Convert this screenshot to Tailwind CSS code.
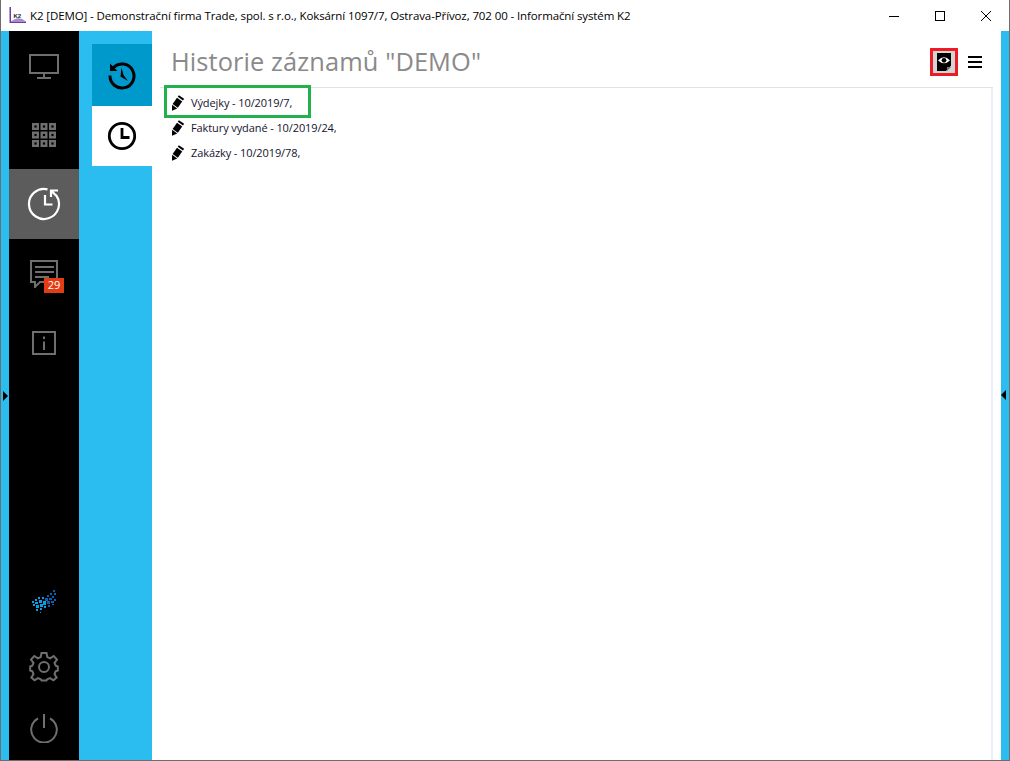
<!DOCTYPE html>
<html lang="cs">
<head>
  <meta charset="UTF-8">
  <script src="https://cdn.jsdelivr.net/npm/@tailwindcss/browser@4"></script>
  <title>K2 - Historie záznamů</title>
</head>
<body class="overflow-hidden bg-white">
  <div class="relative flex h-[761px] w-[1010px] flex-col overflow-hidden border-x border-b border-[#6e6e6e] font-['Open_Sans',sans-serif]">

    <!-- title bar -->
    <header class="flex h-[31px] shrink-0 items-center bg-white">
      <svg class="ml-2 h-[18px] w-[18px] shrink-0" viewBox="0 0 18 18">
        <path d="M0.5 0 V16 H17 V14.5 H2 V0 Z" fill="#6b3fa0"/>
        <path d="M2 15 Q9 8 17 14.5 Z" fill="#a58ad0"/>
        <text x="4.5" y="10.5" font-size="6" font-weight="700" font-family="Liberation Sans" fill="#222">K2</text>
      </svg>
      <span class="ml-[3px] whitespace-nowrap text-[11.5px] tracking-[-0.11px] text-black">K2 [DEMO] - Demonstrační firma Trade, spol. s r.o., Koksární 1097/7, Ostrava-Přívoz, 702 00 - Informační systém K2</span>
      <div class="ml-auto flex items-center">
        <svg class="mr-[34px] h-[12px] w-[12px]" viewBox="0 0 12 12"><path d="M1 6.5H11" stroke="#000" stroke-width="1"/></svg>
        <svg class="mr-[34px] h-[12px] w-[12px]" viewBox="0 0 12 12"><rect x="1.5" y="1.5" width="9" height="9" fill="none" stroke="#000" stroke-width="1"/></svg>
        <svg class="mr-[17px] h-[12px] w-[12px]" viewBox="0 0 12 12"><path d="M1 1L11 11M11 1L1 11" stroke="#000" stroke-width="1"/></svg>
      </div>
    </header>

    <div class="flex min-h-0 flex-1 bg-[#2bbcf0]">
      <!-- main menu -->
      <nav class="ml-2 flex w-[70px] shrink-0 flex-col bg-black">
        <div class="flex h-[69px] items-center justify-center">
          <svg class="h-[32px] w-[32px]" viewBox="0 0 32 32" fill="none" stroke="#6f6f6f" stroke-width="2"><rect x="2" y="5" width="28" height="18"/><path d="M16 23V27M9 28H23"/></svg>
        </div>
        <div class="flex h-[69px] items-center justify-center">
          <svg class="h-[24px] w-[24px]" viewBox="0 0 24 24" fill="none" stroke="#6f6f6f" stroke-width="2.4">
            <rect x="1.2" y="1.2" width="4.6" height="4.6"/><rect x="9.7" y="1.2" width="4.6" height="4.6"/><rect x="18.2" y="1.2" width="4.6" height="4.6"/>
            <rect x="1.2" y="9.7" width="4.6" height="4.6"/><rect x="9.7" y="9.7" width="4.6" height="4.6"/><rect x="18.2" y="9.7" width="4.6" height="4.6"/>
            <rect x="1.2" y="18.2" width="4.6" height="4.6"/><rect x="9.7" y="18.2" width="4.6" height="4.6"/><rect x="18.2" y="18.2" width="4.6" height="4.6"/>
          </svg>
        </div>
        <div class="flex h-[70px] items-center justify-center bg-[#5c5c5c]">
          <svg class="h-[34px] w-[34px]" viewBox="0 0 34 34" fill="none" stroke="#fff" stroke-width="2.2"><path d="M20.5 2.4A15 15 0 1 0 29 8"/><path d="M18 8V17.5H25.5"/><path d="M24 10V3.5H31M24 3.5L29 8.5"/></svg>
        </div>
        <div class="flex h-[69px] items-center justify-center">
          <div class="relative h-[35px] w-[40px]">
            <svg class="absolute left-[6px] top-[4px] h-[28px] w-[28px]" viewBox="0 0 28 28" fill="none" stroke="#6f6f6f" stroke-width="2"><path d="M1 1H27V22H10L5 27V22H1Z"/><path d="M5 7H24M5 12H24M5 17H19"/></svg>
            <span class="absolute left-[20px] top-[22px] flex h-[15px] w-[20px] items-center justify-center bg-[#e23c14] text-[11px] text-white">29</span>
          </div>
        </div>
        <div class="flex h-[69px] items-center justify-center">
          <svg class="h-[24px] w-[24px]" viewBox="0 0 24 24" fill="none" stroke="#6f6f6f" stroke-width="2"><rect x="1" y="1" width="22" height="22"/><path d="M12 5.5V8M12 10.5V19"/></svg>
        </div>

        <div class="mt-auto flex flex-col items-center pb-[17px]">
          <svg class="h-[24px] w-[24px]" viewBox="0 0 24 24">
            <g fill="#0aa0e8">
              <rect x="0" y="11" width="2" height="2"/><rect x="1" y="14" width="2" height="2"/><rect x="3" y="9" width="2" height="2"/><rect x="3" y="12" width="3" height="2"/><rect x="4" y="15" width="3" height="3"/><rect x="4" y="19" width="2" height="2"/><rect x="6" y="7" width="2" height="2"/><rect x="7" y="10" width="3" height="3"/><rect x="8" y="14" width="3" height="3"/><rect x="8" y="18" width="2" height="2"/><rect x="10" y="7" width="2" height="2"/><rect x="11" y="11" width="3" height="4"/><rect x="12" y="16" width="2" height="2"/><rect x="8" y="22" width="1" height="1"/>
            </g>
            <g fill="#0b5fae">
              <rect x="13" y="8" width="3" height="3"/><rect x="15" y="11" width="3" height="3"/><rect x="15" y="5" width="2" height="2"/><rect x="17" y="8" width="3" height="2"/><rect x="18" y="3" width="2" height="2"/><rect x="19" y="11" width="3" height="2"/><rect x="20" y="6" width="2" height="2"/><rect x="21" y="0" width="2" height="2"/><rect x="22" y="3" width="2" height="2"/><rect x="22" y="9" width="2" height="2"/><rect x="16" y="15" width="2" height="2"/><rect x="20" y="14" width="2" height="1"/>
            </g>
          </svg>
          <svg class="mt-[38px] h-[30px] w-[30px]" viewBox="0 0 30 30" fill="none" stroke="#6f6f6f" stroke-width="2">
            <path d="M12.5 1.5H17.5L18.3 5.6L21.2 6.8L24.7 4.5L28 8L25.5 11.4L26.7 14.2L28.8 15V19L26.6 19.8L25.5 22.6L27.6 26L24.4 28.8L21 26.7L18.2 27.9L17.4 29H12.6L11.8 27.9L9 26.7L5.6 28.8L2.4 26L4.5 22.6L3.4 19.8L1.2 19V15L3.3 14.2L4.5 11.4L2 8L5.3 4.5L8.8 6.8L11.7 5.6Z" transform="translate(0 -.5)"/>
            <circle cx="15" cy="15" r="5"/>
          </svg>
          <svg class="mt-[31px] h-[30px] w-[30px]" viewBox="0 0 30 30" fill="none" stroke="#6f6f6f" stroke-width="2"><path d="M9 5.5A12.8 12.8 0 1 0 21 5.5"/><path d="M15 1V15"/></svg>
        </div>
      </nav>

      <!-- sub menu -->
      <aside class="ml-[13px] mt-[13px] flex w-[60px] shrink-0 flex-col">
        <div class="flex h-[62px] items-center justify-center bg-[#0099cc]">
          <svg class="h-[30px] w-[30px]" viewBox="0 0 30 30" fill="none" stroke="#000" stroke-width="3"><path d="M6.5 7.5A12 12 0 1 1 3 15.5"/><path d="M3 3.5V11H10.5Z" fill="#000" stroke="none"/><path d="M14.5 7.5L16.5 15L21 21L13.5 16.5Z" fill="#000" stroke="none"/></svg>
        </div>
        <div class="flex h-[60px] items-center justify-center bg-white">
          <svg class="h-[30px] w-[30px]" viewBox="0 0 30 30" fill="none" stroke="#000" stroke-width="2.8"><circle cx="15" cy="15" r="12.7"/><path d="M15 7V16.5H22.5"/></svg>
        </div>
      </aside>

      <!-- content -->
      <main class="flex w-[849px] shrink-0 flex-col bg-white pl-2 pr-2">
        <div class="flex h-[57px] shrink-0 items-center justify-between border-b border-[#e2e2e2] pt-[5px]">
          <h1 class="ml-[11px] whitespace-nowrap text-[25.4px] font-normal leading-none tracking-[0.1px] text-[#8a8a8a]">Historie záznamů "DEMO"</h1>
          <div class="mr-[11px] flex items-center gap-[10px]">
            <button class="flex h-[28px] w-[28px] items-center justify-center border-[3px] border-[#ed1c24] bg-[#d4d4d4]">
              <svg class="h-[18px] w-[14px]" viewBox="0 0 14 18">
                <path d="M0 0H14V12.5L9 18H0Z" fill="#000"/>
                <path d="M1 7.5Q7 1 13 7.5Q7 13 1 7.5Z" fill="#fff"/>
                <circle cx="7" cy="7.3" r="2.4" fill="#000"/>
                <path d="M10 18V14H14Z" fill="#777"/>
              </svg>
            </button>
            <svg class="h-[12px] w-[14px]" viewBox="0 0 14 12" fill="#000"><rect y="0" width="14" height="2"/><rect y="5" width="14" height="2"/><rect y="10" width="14" height="2"/></svg>
          </div>
        </div>
        <ul class="flex-1 border-r-2 border-[#e8eefc] pt-[2px] text-[11px] leading-[25px] tracking-[-0.1px] text-[#14142b]">
          <li class="relative flex h-[25px] items-center pl-[11px]">
            <svg class="h-[16px] w-[14px] shrink-0" viewBox="0 0 14 16" fill="#000"><path d="M7.9 .15L13.1 3.85L11.96 5.47L6.76 1.77Z"/><path d="M6 2.85L11.2 6.55L6.83 12.75L1.63 9.05Z"/><path d="M1.06 9.87L6.26 13.57L1 15.8Z"/></svg>
            <span class="ml-[6px] whitespace-nowrap">Výdejky - 10/2019/7,</span>
            <span class="absolute -top-[5px] left-[4px] h-[33px] w-[147px] border-[3px] border-[#22b14c]"></span>
          </li>
          <li class="flex h-[25px] items-center pl-[11px]">
            <svg class="h-[16px] w-[14px] shrink-0" viewBox="0 0 14 16" fill="#000"><path d="M7.9 .15L13.1 3.85L11.96 5.47L6.76 1.77Z"/><path d="M6 2.85L11.2 6.55L6.83 12.75L1.63 9.05Z"/><path d="M1.06 9.87L6.26 13.57L1 15.8Z"/></svg>
            <span class="ml-[6px] whitespace-nowrap">Faktury vydané - 10/2019/24,</span>
          </li>
          <li class="flex h-[25px] items-center pl-[11px]">
            <svg class="h-[16px] w-[14px] shrink-0" viewBox="0 0 14 16" fill="#000"><path d="M7.9 .15L13.1 3.85L11.96 5.47L6.76 1.77Z"/><path d="M6 2.85L11.2 6.55L6.83 12.75L1.63 9.05Z"/><path d="M1.06 9.87L6.26 13.57L1 15.8Z"/></svg>
            <span class="ml-[6px] whitespace-nowrap">Zakázky - 10/2019/78,</span>
          </li>
        </ul>
      </main>
    </div>

    <!-- panel collapse arrows -->
    <span class="absolute left-[2px] top-[391px] h-0 w-0 border-y-[5px] border-l-[5px] border-y-transparent border-l-black"></span>
    <span class="absolute left-[1000px] top-[390px] h-0 w-0 border-y-[5px] border-r-[5px] border-y-transparent border-r-black"></span>
  </div>
</body>
</html>
